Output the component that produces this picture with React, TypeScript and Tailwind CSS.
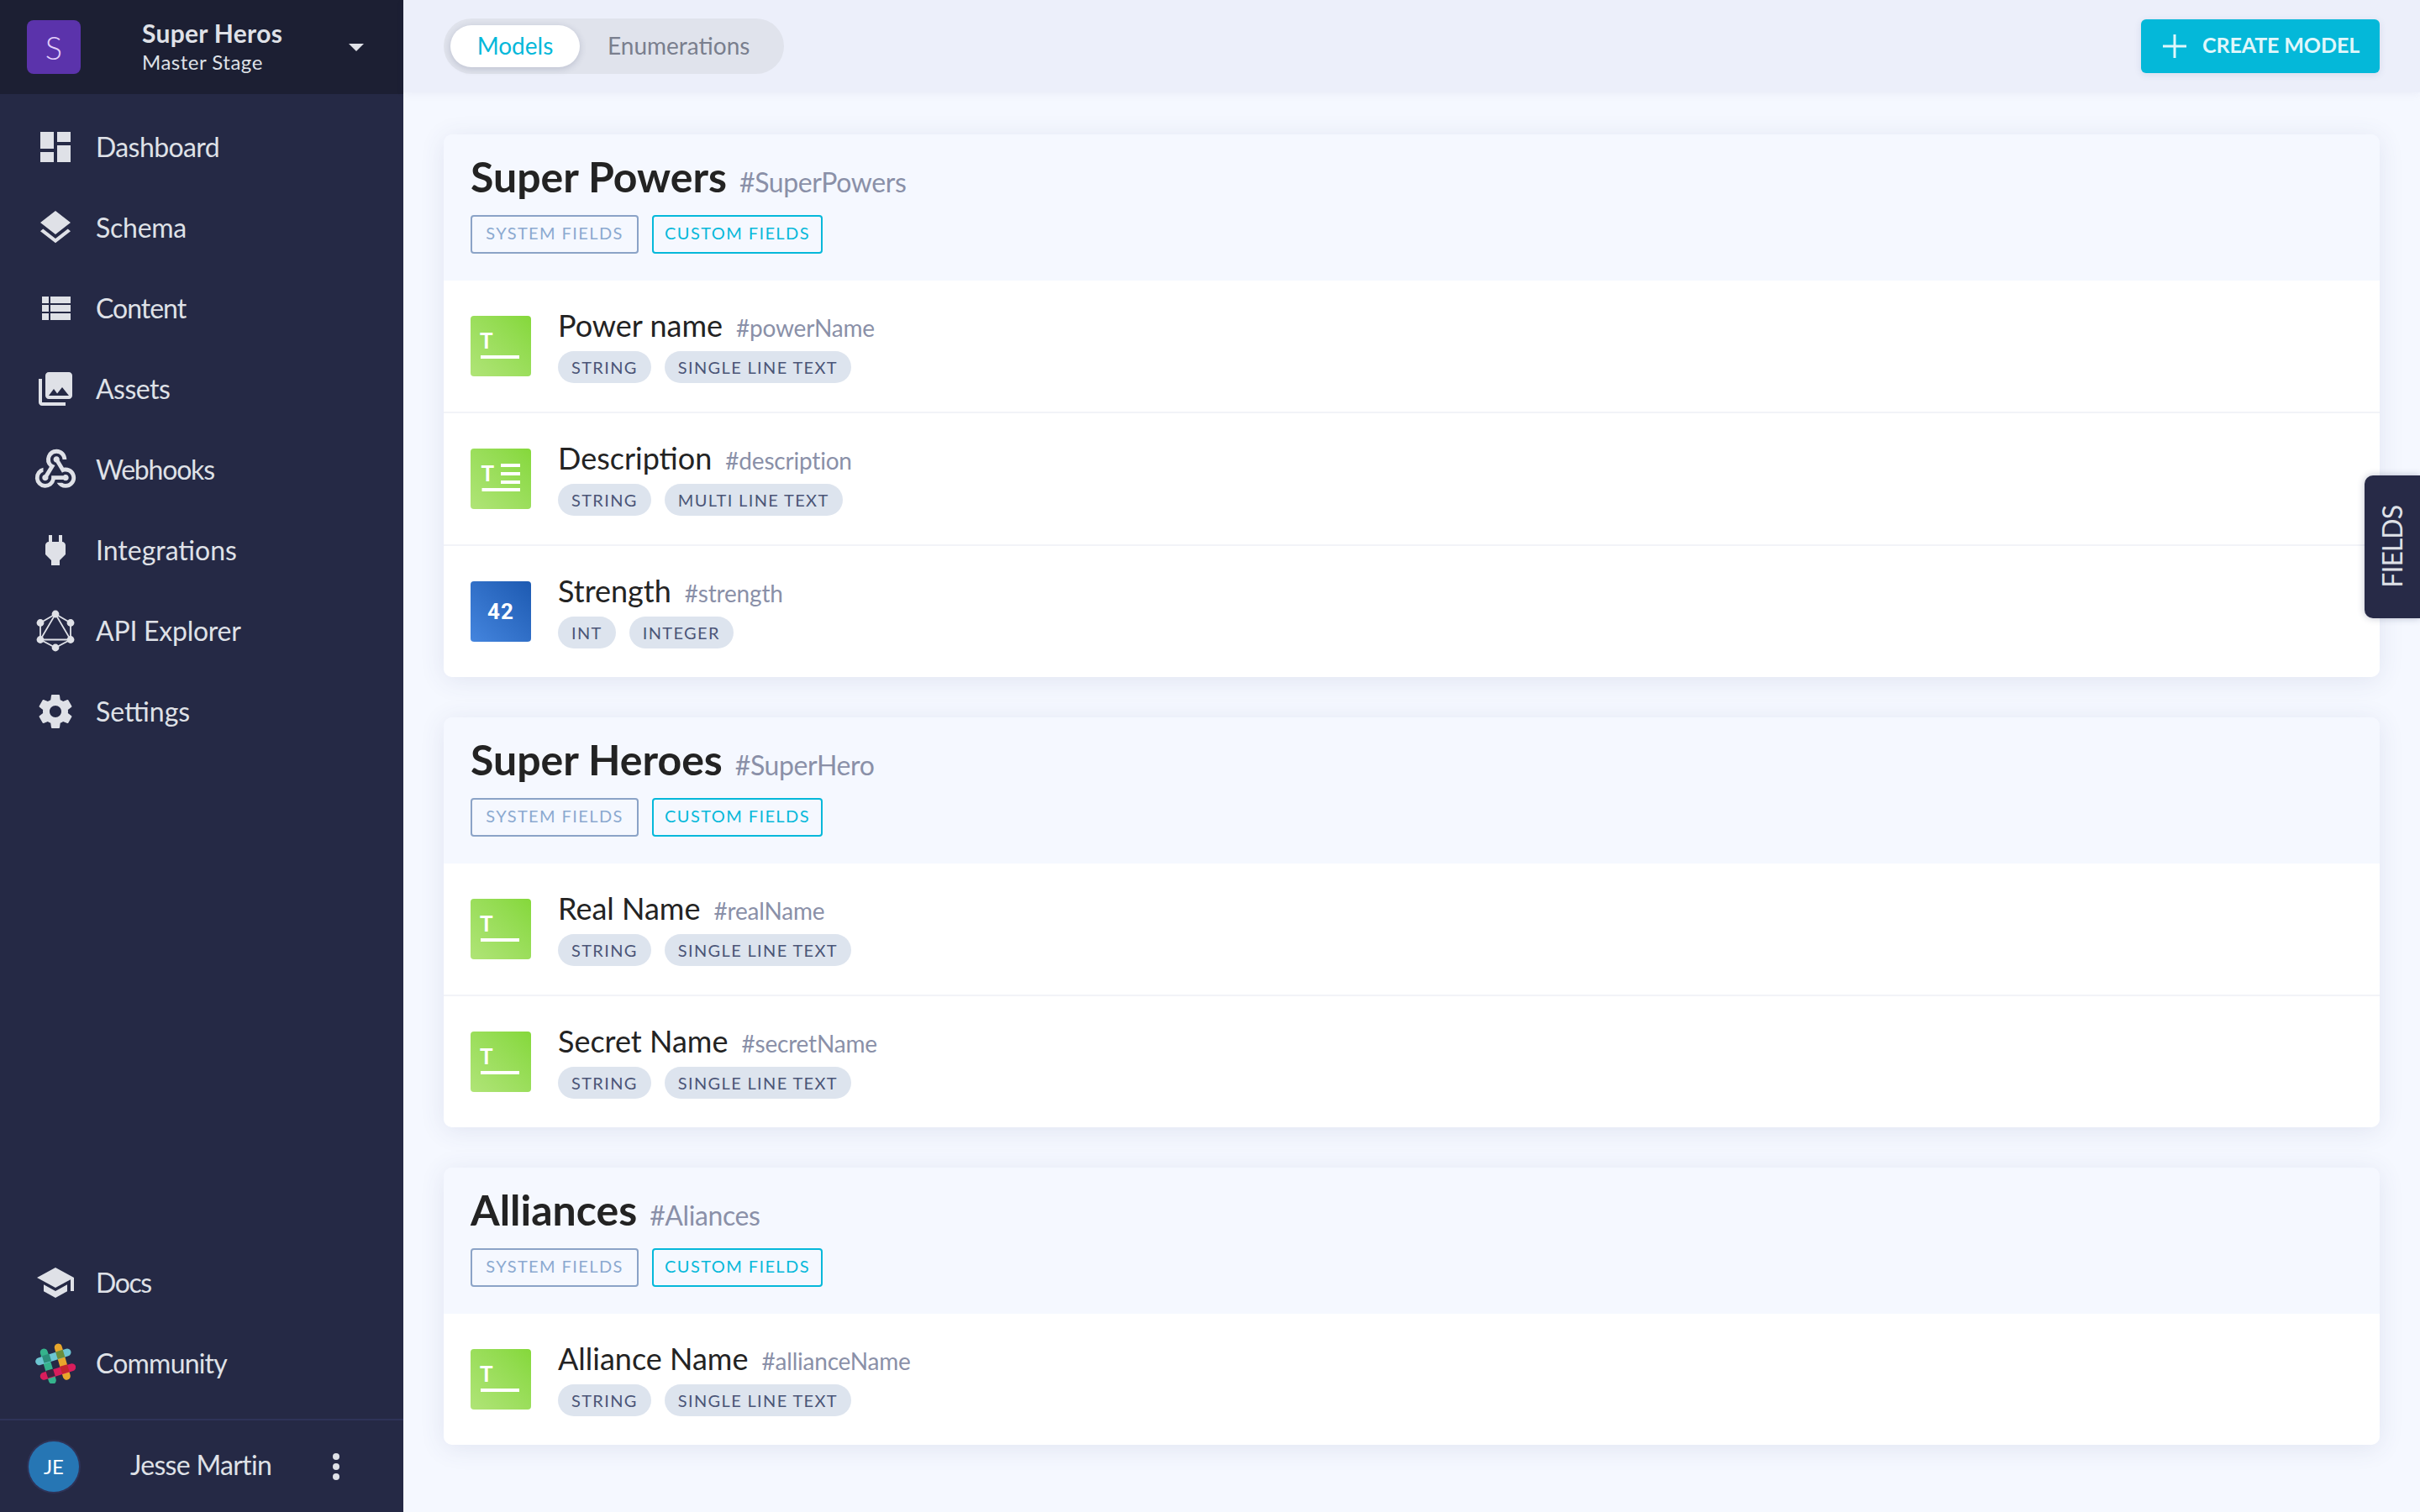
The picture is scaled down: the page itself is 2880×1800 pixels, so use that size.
import React from "react";
import { MdWebhook } from "react-icons/md";

const P = ({ d }: { d: string }) => (
  <svg viewBox="0 0 24 24" className="w-12 h-12 fill-[#dfe1e7]"><path d={d} /></svg>
);

const GraphQL = () => {
  const pts = [[24, 5], [42, 15.5], [42, 35.5], [24, 45], [6, 35.5], [6, 15.5]];
  return (
    <svg viewBox="0 0 48 50" className="w-12 h-[50px]">
      <g stroke="#dfe1e7" strokeWidth="1.8" fill="none">
        <polygon points="24,5 42,15.5 42,35.5 24,45 6,35.5 6,15.5" />
        <polygon points="24,5 42,35.5 6,35.5" />
      </g>
      {pts.map((p, i) => <circle key={i} cx={p[0]} cy={p[1]} r="4.4" fill="#dfe1e7" />)}
    </svg>
  );
};

const Slack = () => (
  <svg viewBox="0 0 48 48" className="w-12 h-12">
    <g strokeWidth="9" strokeLinecap="round" fill="none">
      <line x1="10.3" y1="11" x2="20.3" y2="44.3" stroke="#35b38c" />
      <line x1="27.3" y1="5" x2="37.3" y2="39.3" stroke="#e8a62c" />
      <line x1="4.7" y1="21.7" x2="38" y2="11" stroke="#6cc5d1" />
      <line x1="10.3" y1="39.3" x2="43.7" y2="28.7" stroke="#d91d5c" />
    </g>
    <g>
      <rect x="-4.5" y="-4.5" width="9" height="9" fill="#2b8f7a" transform="translate(13.5 18.2) rotate(-17)" />
      <rect x="-4.5" y="-4.5" width="9" height="9" fill="#6b8e3b" transform="translate(29.7 13.4) rotate(-17)" />
      <rect x="-4.5" y="-4.5" width="9" height="9" fill="#3b2340" transform="translate(18 36) rotate(-17)" />
      <rect x="-4.5" y="-4.5" width="9" height="9" fill="#c4252d" transform="translate(35 30.8) rotate(-17)" />
    </g>
  </svg>
);

const topNav: { label: string; ls: string; icon: React.ReactNode }[] = [
  { label: "Dashboard", ls: "tracking-[-0.6px]", icon: <P d="M3 13h8V3H3v10zm0 8h8v-6H3v6zm10 0h8V11h-8v10zm0-18v6h8V3h-8z" /> },
  { label: "Schema", ls: "tracking-[-0.25px]", icon: <P d="M11.99 18.54l-7.37-5.73L3 14.07l9 7 9-7-1.63-1.27-7.38 5.74zM12 16l7.36-5.73L21 9l-9-7-9 7 1.63 1.27L12 16z" /> },
  { label: "Content", ls: "tracking-[-1px]", icon: <P d="M4 14h4v-4H4v4zm0 5h4v-4H4v4zM4 9h4V5H4v4zm5 5h12v-4H9v4zm0 5h12v-4H9v4zM9 5v4h12V5H9z" /> },
  { label: "Assets", ls: "tracking-[-0.55px]", icon: <P d="M22 16V4c0-1.1-.9-2-2-2H8c-1.1 0-2 .9-2 2v12c0 1.1.9 2 2 2h12c1.1 0 2-.9 2-2zm-11-4l2.03 2.71L16 11l4 5H8l3-4zM2 6v14c0 1.1.9 2 2 2h14v-2H4V6H2z" /> },
  { label: "Webhooks", ls: "tracking-[-1.2px]", icon: <MdWebhook className="w-[58px] h-[58px] shrink-0 text-[#dfe1e7]" /> },
  { label: "Integrations", ls: "tracking-[0px]", icon: <P d="M16.01 7L16 3h-2v4h-4V3H8v4h-.01C7 6.99 6 7.99 6 8.99v5.49L9.5 18v3h5v-3l3.5-3.51v-5.5c0-1-1-2-1.99-1.99z" /> },
  { label: "API Explorer", ls: "tracking-[-0.25px]", icon: <GraphQL /> },
  { label: "Settings", ls: "tracking-[0px]", icon: <P d="M19.43 12.98c.04-.32.07-.64.07-.98s-.03-.66-.07-.98l2.11-1.65c.19-.15.24-.42.12-.64l-2-3.46c-.12-.22-.39-.3-.61-.22l-2.49 1c-.52-.4-1.08-.73-1.69-.98l-.38-2.65C14.46 2.18 14.25 2 14 2h-4c-.25 0-.46.18-.49.42l-.38 2.65c-.61.25-1.17.59-1.69.98l-2.49-1c-.23-.09-.49 0-.61.22l-2 3.46c-.13.22-.07.49.12.64l2.11 1.65c-.04.32-.07.65-.07.98s.03.66.07.98l-2.11 1.65c-.19.15-.24.42-.12.64l2 3.46c.12.22.39.3.61.22l2.49-1c.52.4 1.08.73 1.69.98l.38 2.65c.03.24.24.42.49.42h4c.25 0 .46-.18.49-.42l.38-2.65c.61-.25 1.17-.59 1.69-.98l2.49 1c.23.09.49 0 .61-.22l2-3.46c.12-.22.07-.49-.12-.64l-2.11-1.65zM12 15.5c-1.93 0-3.5-1.57-3.5-3.5s1.57-3.5 3.5-3.5 3.5 1.57 3.5 3.5-1.57 3.5-3.5 3.5z" /> },
];

const bottomNav = [
  { label: "Docs", ls: "tracking-[-1.4px]", icon: <P d="M5 13.18v4L12 21l7-3.82v-4L12 17l-7-3.82zM12 3L1 9l11 6 9-4.91V17h2V9L12 3z" /> },
  { label: "Community", ls: "tracking-[-0.8px]", icon: <Slack /> },
];

const NavItem = ({ label, ls, icon }: { label: string; ls: string; icon: React.ReactNode }) => (
  <div className="h-24 flex items-center pl-[42px] gap-6">
    <div className="w-12 h-12 flex items-center justify-center">{icon}</div>
    <span className={"text-[32px] leading-none text-[#dfe1e7] " + ls}>{label}</span>
  </div>
);

const TileSingle = () => (
  <div className="w-[72px] h-[72px] rounded-[4px] bg-linear-to-tr from-[#b0e477] to-[#85d83a] shrink-0">
    <svg viewBox="0 0 72 72" className="w-[72px] h-[72px]">
      <text x="11" y="39" fontSize="26" fontWeight="700" fill="#fff" fontFamily="Lato, sans-serif">T</text>
      <rect x="12" y="47" width="46" height="4" fill="#fff" />
    </svg>
  </div>
);

const TileMulti = () => (
  <div className="w-[72px] h-[72px] rounded-[4px] bg-linear-to-tr from-[#b0e477] to-[#85d83a] shrink-0">
    <svg viewBox="0 0 72 72" className="w-[72px] h-[72px]">
      <text x="12.5" y="39" fontSize="26" fontWeight="700" fill="#fff" fontFamily="Lato, sans-serif">T</text>
      <rect x="36" y="18" width="23" height="4" fill="#fff" />
      <rect x="36" y="28" width="23" height="4" fill="#fff" />
      <rect x="36" y="38" width="23" height="4" fill="#fff" />
      <rect x="13.5" y="47" width="45.5" height="4" fill="#fff" />
    </svg>
  </div>
);

const TileInt = () => (
  <div className="w-[72px] h-[72px] rounded-[4px] bg-linear-to-tr from-[#4485de] to-[#1d5ab1] shrink-0 flex items-center justify-center text-white text-[26px] font-bold tracking-[1px] [font-family:Roboto,sans-serif]">
    42
  </div>
);

const Tag = ({ children }: { children: React.ReactNode }) => (
  <span className="h-[38px] px-4 rounded-full bg-[#dde4ee] text-[#4b5577] text-[20px] leading-[38px] tracking-[1.35px] whitespace-nowrap">
    {children}
  </span>
);

type Field = { name: string; api: string; tags: string[]; tile: React.ReactNode };

const Row = ({ f, last }: { f: Field; last: boolean }) => (
  <div className={"bg-white flex items-center pl-8 gap-8 " + (last ? "h-[156px]" : "h-[158px] border-b-2 border-[#f2f3f8]")}>
    {f.tile}
    <div className="flex flex-col gap-[7px]">
      <div className="flex items-baseline gap-4 h-[43px] -translate-y-[2px]">
        <span className="text-[36px] leading-[43px] text-[#232323]">{f.name}</span>
        <span className="text-[28px] leading-[43px] text-[#8a90a8] tracking-[-0.2px]">{f.api}</span>
      </div>
      <div className="flex gap-4">
        {f.tags.map((t) => <Tag key={t}>{t}</Tag>)}
      </div>
    </div>
  </div>
);

const Card = ({ title, api, fields }: { title: string; api: string; fields: Field[] }) => (
  <div className="rounded-[10px] shadow-[0_4px_30px_rgba(60,70,130,0.11)] overflow-hidden">
    <div className="h-[174px] bg-[#f5f8ff] px-8 pt-5">
      <div className="flex items-baseline gap-[15px] h-[60px]">
        <span className="text-[50px] leading-[60px] font-bold text-[#232323]">{title}</span>
        <span className="text-[32px] leading-[60px] text-[#8a90a8] tracking-[-0.4px]">{api}</span>
      </div>
      <div className="flex gap-4 mt-4">
        <span className="h-[46px] w-[200px] rounded-[4px] border-2 border-[#8ba3c7] text-[#8ba9d0] text-[20px] leading-[38px] tracking-[1.4px] text-center whitespace-nowrap">SYSTEM FIELDS</span>
        <span className="h-[46px] w-[203px] rounded-[4px] border-2 border-[#05b8da] text-[#05b8da] text-[20px] leading-[38px] tracking-[1.4px] text-center whitespace-nowrap">CUSTOM FIELDS</span>
      </div>
    </div>
    {fields.map((f, i) => <Row key={f.api} f={f} last={i === fields.length - 1} />)}
  </div>
);

const S = ["STRING", "SINGLE LINE TEXT"];

export default function App() {
  return (
    <div className="h-screen w-screen overflow-hidden flex bg-[#f5f8ff] [font-family:Lato,sans-serif] relative">
      <aside className="w-[480px] shrink-0 bg-[#252945] flex flex-col">
        <div className="h-[112px] shrink-0 bg-[#1c1f33] flex items-center pl-8">
          <div className="w-16 h-16 rounded-[8px] bg-[#5b33ab] flex items-center justify-center text-[#e3cffa] text-[38px] font-light">S</div>
          <div className="ml-[73px] w-[246px] flex flex-col -translate-y-[1px]">
            <span className="text-[30px] leading-[38px] font-bold text-[#dfe1e7] tracking-[0.3px]">Super Heros</span>
            <span className="text-[24px] leading-[32px] text-[#dfe1e7] tracking-[0.5px]">Master Stage</span>
          </div>
          <div className="w-0 h-0 border-x-[9px] border-x-transparent border-t-[9px] border-t-[#e0e2e8]" />
        </div>
        <nav className="pt-[15px] flex-1">
          {topNav.map((n) => <NavItem key={n.label} label={n.label} ls={n.ls} icon={n.icon} />)}
        </nav>
        <div className="pb-[18px]">
          {bottomNav.map((n) => <NavItem key={n.label} label={n.label} ls={n.ls} icon={n.icon} />)}
        </div>
        <div className="h-[111px] shrink-0 border-t-2 border-[#2e3358] flex items-center pl-[34px]">
          <div className="w-[60px] h-[60px] rounded-full bg-[#2676b4] ring-2 ring-[#2e3358] flex items-center justify-center text-white text-[24px]">JE</div>
          <span className="ml-[61px] w-[241px] text-[32px] leading-none text-[#dfe1e7] tracking-[-0.7px] -translate-y-[2px]">Jesse Martin</span>
          <div className="flex flex-col gap-1">
            <i className="block w-2 h-2 rounded-full bg-[#dfe1e7]" />
            <i className="block w-2 h-2 rounded-full bg-[#dfe1e7]" />
            <i className="block w-2 h-2 rounded-full bg-[#dfe1e7]" />
          </div>
        </div>
      </aside>

      <main className="flex-1 min-w-0 flex flex-col">
        <header className="h-[110px] shrink-0 bg-[#eceffa] shadow-[0_2px_10px_rgba(60,70,130,0.06)] flex items-center justify-between px-12">
          <div className="h-[66px] rounded-full bg-[#e0e3ec] flex items-center pl-2 pr-[41px]">
            <div className="h-[50px] w-[154px] pb-[3px] rounded-full bg-white shadow-[0_2px_8px_rgba(40,50,90,0.2)] flex items-center justify-center text-[#05b8da] text-[28px]">Models</div>
            <span className="ml-[33px] pb-[3px] text-[28px] text-[#7a7f8e]">Enumerations</span>
          </div>
          <div className="h-16 w-[284px] rounded-[6px] bg-[#04b8d9] shadow-[0_2px_8px_rgba(60,70,130,0.12)] flex items-center pl-[26px] gap-[19px]">
            <svg viewBox="0 0 28 28" className="w-7 h-7"><path d="M12.5 0h3v12.5H28v3H15.5V28h-3V15.5H0v-3h12.5z" fill="#e0f7fb" /></svg>
            <span className="text-[25px] pb-[2px] font-bold tracking-[-0.1px] text-[#e0f7fb] whitespace-nowrap">CREATE MODEL</span>
          </div>
        </header>

        <div className="flex flex-col gap-12 px-12 pt-[50px]">
          <Card title="Super Powers" api="#SuperPowers" fields={[
            { name: "Power name", api: "#powerName", tags: S, tile: <TileSingle /> },
            { name: "Description", api: "#description", tags: ["STRING", "MULTI LINE TEXT"], tile: <TileMulti /> },
            { name: "Strength", api: "#strength", tags: ["INT", "INTEGER"], tile: <TileInt /> },
          ]} />
          <Card title="Super Heroes" api="#SuperHero" fields={[
            { name: "Real Name", api: "#realName", tags: S, tile: <TileSingle /> },
            { name: "Secret Name", api: "#secretName", tags: S, tile: <TileSingle /> },
          ]} />
          <Card title="Alliances" api="#Aliances" fields={[
            { name: "Alliance Name", api: "#allianceName", tags: S, tile: <TileSingle /> },
          ]} />
        </div>
      </main>

      <div className="absolute right-0 top-[566px] w-[66px] h-[170px] rounded-l-[10px] bg-[#272a47] shadow-[0_0_8px_rgba(40,50,90,0.3)] flex items-center justify-center">
        <span className="[writing-mode:vertical-rl] rotate-180 text-[32px] tracking-[-1px] text-[#dfe1e7] leading-none">FIELDS</span>
      </div>
    </div>
  );
}
